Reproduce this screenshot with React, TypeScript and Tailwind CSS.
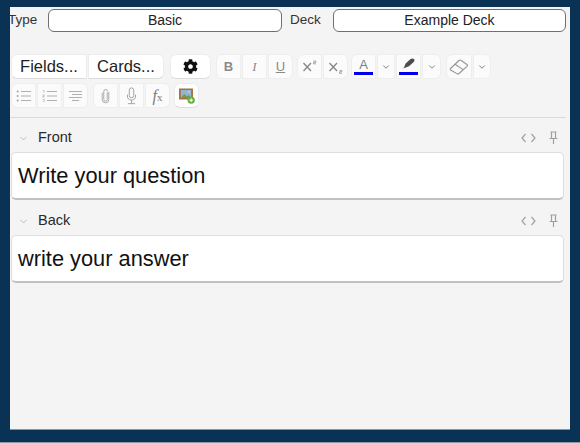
import React from "react";
import { FaCog } from "react-icons/fa";
import { ChevronDown } from "lucide-react";

const font = { fontFamily: '"Liberation Sans", Arial, sans-serif' };

function Btn({ w = "w-[25px]", rounded = "", children }: { w?: string; rounded?: string; children?: React.ReactNode }) {
  return (
    <div className={`${w} ${rounded} h-[25px] bg-[#fbfbfb] border border-[#eeeeee] flex items-center justify-center text-[#8c8c8c] shrink-0`}>
      {children}
    </div>
  );
}

const Chev = () => <ChevronDown size={10} strokeWidth={2.2} className="text-[#7a7a7a]" />;

const Ul = () => (
  <svg width="16" height="14" viewBox="0 0 16 14" fill="none" stroke="#b0b0b0" strokeWidth="1.1">
    <path d="M5 2.500h10M5 7h10M5 11.500h10" />
    <circle cx="1.700" cy="2.500" r="1" fill="#a3a3a3" stroke="none" />
    <circle cx="1.700" cy="7" r="1" fill="#a3a3a3" stroke="none" />
    <circle cx="1.700" cy="11.500" r="1" fill="#a3a3a3" stroke="none" />
  </svg>
);
const Ol = () => (
  <svg width="16" height="14" viewBox="0 0 16 14" fill="none" stroke="#b0b0b0" strokeWidth="1.1">
    <path d="M5 2.500h10M5 7h10M5 11.500h10" />
    <path d="M1 1.200h1v2.400M.6 6h1.600v1.100H.8v1h1.600M.7 10.300h1.600v2.200H.7" strokeWidth=".7" />
  </svg>
);
const Align = () => (
  <svg width="15" height="14" viewBox="0 0 15 14" fill="none" stroke="#b0b0b0" strokeWidth="1.200">
    <path d="M1 2.500h13M4 5.500h10M1 8.500h13M4 11.500h7" />
  </svg>
);
const Clip = () => (
  <svg width="9" height="16" viewBox="0 0 11 18" fill="none" stroke="#a8a8a8" strokeWidth="1.200">
    <path d="M7.600 4.500v8.600a2.100 2.100 0 0 1-4.200 0V3.300a2.300 2.300 0 0 1 4.600 0M1.500 5v8.300a4 4 0 0 0 8 0V4" />
  </svg>
);
const Mic = () => (
  <svg width="11" height="18" viewBox="0 0 12 20" fill="none" stroke="#a3a3a3" strokeWidth="1.100">
    <rect x="3.500" y="1" width="5" height="11" rx="2.500" />
    <path d="M1.500 8.500v1.500a4.500 4.500 0 0 0 9 0V8.500M6 14.500V18M2 18.500h8" />
  </svg>
);
const ImageAdd = () => (
  <svg width="18" height="18" viewBox="0 0 18 18">
    <rect x="1" y="1.500" width="14" height="11" fill="#a8703c" rx=".5" />
    <rect x="2.800" y="3" width="10.400" height="8" fill="#8fb6d8" />
    <path d="M2.800 11l3.500-4 2.500 2.500 2-1.500 2.400 3z" fill="#6e9a4c" />
    <circle cx="11" cy="5" r="1" fill="#e9d36b" />
    <circle cx="13.200" cy="13.200" r="3.600" fill="#65b33a" />
    <path d="M13.200 11.400v3.600M11.400 13.200H15" stroke="#fff" strokeWidth="1" />
  </svg>
);
const Sup = ({ sub }: { sub?: boolean }) => (
  <svg width="16" height="14" viewBox="0 0 16 14" fill="none" stroke="#858585">
    <path d="M1.500 3l7.500 8M9 3l-7.500 8" strokeWidth="1.300" />
    {sub ? (
      <path d="M11.500 10.500h2.300v1.300h-2.300v1.500h2.500" strokeWidth=".7" />
    ) : (
      <path d="M11.500 1h2.300v1.300h-2.300v1.500h2.500" strokeWidth=".7" />
    )}
  </svg>
);
const Marker = () => (
  <svg width="18" height="12" viewBox="0 0 18 12">
    <path d="M4 9.500l1.600-4L10.600 1c1-.8 2.600-.8 3.400.1.800 1 .6 2.200-.3 3L9 8.200l-4 1.600-3 .7z" fill="#4d4d4d" />
  </svg>
);
const Eraser = () => (
  <svg width="20" height="18" viewBox="0 0 20 18" fill="none" stroke="#949494" strokeWidth="1.100">
    <path d="M1.500 10.500L10 2.500a1.600 1.600 0 0 1 2.200 0l5.800 4a1.200 1.200 0 0 1 0 1.900L10 15.500a1.600 1.600 0 0 1-2.100.1L1.600 12a1 1 0 0 1-.1-1.500z" />
    <path d="M6 6.300l8.200 5.300" />
  </svg>
);
const Code = () => (
  <svg width="15" height="10" viewBox="0 0 15 10" fill="none" stroke="#a0a0a0" strokeWidth="1.200">
    <path d="M4.500 1L1 5l3.500 4M10.500 1L14 5l-3.500 4" />
  </svg>
);
const Pin = () => (
  <svg width="9" height="14" viewBox="0 0 9 14" fill="none" stroke="#a0a0a0" strokeWidth="1.200">
    <path d="M1.500 1h6M2.500 1v6M6.500 1v6M.5 7.500h8M4.500 7.500V13" />
  </svg>
);

function Field({ label, text }: { label: string; text: string }) {
  return (
    <div>
      <div className="h-[27px] flex items-center pb-px pl-[8px] pr-[12px] text-[14.500px] text-[#2a2a2a]">
        <ChevronDown size={11} strokeWidth={1.500} className="text-[#a5a5a5] mr-[9px]" />
        <span>{label}</span>
        <div className="ml-auto flex items-center gap-[13px]">
          <Code />
          <Pin />
        </div>
      </div>
      <div className="ml-px mr-[6px] h-[48px] bg-white rounded-[5px] border border-[#dddddd] border-b-2 border-b-[#c0c0c0] flex items-center pl-[6px] pt-[2px] text-[21.800px] text-[#111111]">
        {text}
      </div>
    </div>
  );
}

function Select({ text, w }: { text: string; w: string }) {
  return (
    <div className={`${w} h-[23px] bg-white border border-[#6f6f6f] rounded-[6px] flex items-center justify-center text-[14px] text-[#222222]`}>
      {text}
    </div>
  );
}

export default function App() {
  return (
    <div style={font} className="w-[580px] h-[443px] bg-[#0a3255] border-b border-b-[#8d9aa8] pl-[10px] pt-[7px] overflow-hidden">
      <div className="w-[560px] h-[423px] bg-[#f4f4f4] border-b border-b-[#8496a6] overflow-hidden">
        <div className="flex items-center h-[25px] pt-[2px] text-[13.500px] text-[#333333]">
          <span className="ml-[-2px] w-[40px]">Type</span>
          <Select text="Basic" w="w-[234px]" />
          <span className="ml-[8px] w-[43px]">Deck</span>
          <Select text="Example Deck" w="w-[233px]" />
        </div>

        <div className="mt-[22px] ml-px flex items-center h-[25px]">
          <div className="flex gap-px text-[16.500px] text-[#222222]">
            <div className="w-[76px] h-[25px] bg-white rounded-l-[6px] border border-[#ececec] border-b-[#dcdcdc] flex items-center justify-center">Fields...</div>
            <div className="w-[76px] h-[25px] bg-white rounded-r-[6px] border border-[#ececec] border-b-[#dcdcdc] flex items-center justify-center">Cards...</div>
          </div>
          <div className="ml-[6px] w-[41px] h-[25px] bg-white rounded-[6px] border border-[#ececec] border-b-[#dcdcdc] flex items-center justify-center">
            <FaCog size={15} color="#111111" />
          </div>
          <div className="ml-[5px] flex gap-px">
            <Btn rounded="rounded-l-[6px]"><span className="font-bold text-[13px] text-[#8a8a8a]">B</span></Btn>
            <Btn><span className="italic text-[13px] text-[#8a8a8a]" style={{ fontFamily: '"Liberation Serif", serif' }}>I</span></Btn>
            <Btn rounded="rounded-r-[6px]"><span className="underline text-[13px] text-[#8a8a8a]">U</span></Btn>
          </div>
          <div className="ml-[4px] flex gap-px">
            <Btn rounded="rounded-l-[6px]"><Sup /></Btn>
            <Btn rounded="rounded-r-[6px]"><Sup sub /></Btn>
          </div>
          <div className="ml-[3px] flex gap-px">
            <Btn rounded="rounded-l-[6px]">
              <div className="flex flex-col items-center">
                <span className="text-[13px] leading-[13px] text-[#7d7d7d]">A</span>
                <div className="w-[19px] h-[3px] bg-[#0000ee] mt-px" />
              </div>
            </Btn>
            <Btn w="w-[18px]"><Chev /></Btn>
            <Btn>
              <div className="flex flex-col items-center">
                <Marker />
                <div className="w-[19px] h-[3px] bg-[#0000ee] mt-[2px]" />
              </div>
            </Btn>
            <Btn w="w-[19px]" rounded="rounded-r-[6px]"><Chev /></Btn>
          </div>
          <div className="ml-[5px] flex gap-px">
            <Btn w="w-[26px]" rounded="rounded-l-[6px]"><Eraser /></Btn>
            <Btn w="w-[18px]" rounded="rounded-r-[6px]"><Chev /></Btn>
          </div>
        </div>

        <div className="mt-[4px] ml-px flex items-center h-[25px]">
          <div className="flex gap-px">
            <Btn rounded="rounded-l-[6px]"><Ul /></Btn>
            <Btn><Ol /></Btn>
            <Btn rounded="rounded-r-[6px]"><Align /></Btn>
          </div>
          <div className="ml-[5px] flex gap-px">
            <Btn rounded="rounded-l-[6px]"><Clip /></Btn>
            <Btn><Mic /></Btn>
            <Btn rounded="rounded-r-[6px]">
              <span className="italic text-[16px] text-[#7a7a7a]" style={{ fontFamily: '"Liberation Serif", serif' }}>
                f<span className="not-italic text-[11px]">x</span>
              </span>
            </Btn>
          </div>
          <div className="ml-[4px]">
            <div className="w-[25px] h-[25px] bg-white rounded-[6px] border border-[#ececec] border-b-[#dcdcdc] flex items-center justify-center"><ImageAdd /></div>
          </div>
        </div>

        <div className="mt-[9px] mr-[4px] h-px bg-[#dadada]" />

        <div className="mt-[7px]">
          <Field label="Front" text="Write your question" />
        </div>
        <div className="mt-[8px]">
          <Field label="Back" text="write your answer" />
        </div>
      </div>
    </div>
  );
}
